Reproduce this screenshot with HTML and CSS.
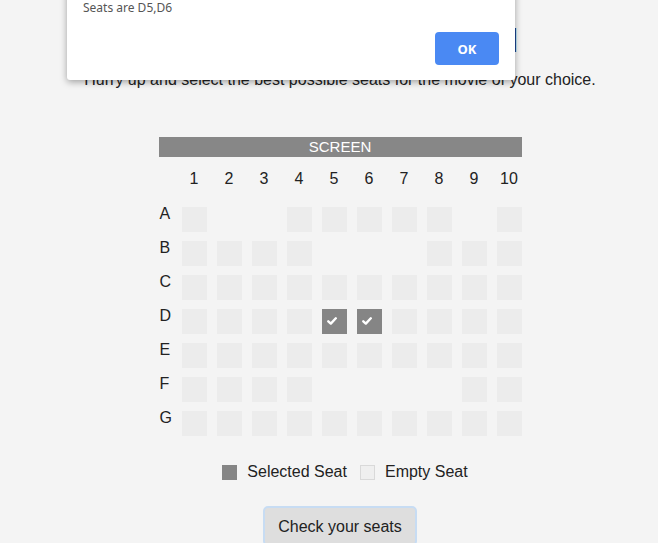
FILE: index.html
```html
<!DOCTYPE html>
<html lang="en">
<head>
<meta charset="utf-8">
<title>Movie Seat Selection</title>
<link rel="stylesheet" href="styles.css">
</head>
<body>
<div class="page">
  <h1 class="title">Online Movie Seat Portal</h1>
  <p class="intro">Hurry up and select the best possible seats for the movie of your choice.</p>

  <div class="hall">
    <div class="screen">SCREEN</div>
    <div class="row numbers">
      <span class="label"></span>
      <span class="num">1</span><span class="num">2</span><span class="num">3</span><span class="num">4</span><span class="num">5</span>
      <span class="num">6</span><span class="num">7</span><span class="num">8</span><span class="num">9</span><span class="num">10</span>
    </div>
    <div class="rows">
      <div class="row">
        <span class="label">A</span>
        <span class="seat"></span><span class="seat none"></span><span class="seat none"></span><span class="seat"></span><span class="seat"></span>
        <span class="seat"></span><span class="seat"></span><span class="seat"></span><span class="seat none"></span><span class="seat"></span>
      </div>
      <div class="row">
        <span class="label">B</span>
        <span class="seat"></span><span class="seat"></span><span class="seat"></span><span class="seat"></span><span class="seat none"></span>
        <span class="seat none"></span><span class="seat none"></span><span class="seat"></span><span class="seat"></span><span class="seat"></span>
      </div>
      <div class="row">
        <span class="label">C</span>
        <span class="seat"></span><span class="seat"></span><span class="seat"></span><span class="seat"></span><span class="seat"></span>
        <span class="seat"></span><span class="seat"></span><span class="seat"></span><span class="seat"></span><span class="seat"></span>
      </div>
      <div class="row">
        <span class="label">D</span>
        <span class="seat"></span><span class="seat"></span><span class="seat"></span><span class="seat"></span>
        <span class="seat selected"><svg class="check" viewBox="0 0 10 8" width="10" height="8"><path d="M1.3 4.3 L3.8 6.6 L8.8 1.3" fill="none" stroke="#fff" stroke-width="2.4" stroke-linecap="round" stroke-linejoin="round"/></svg></span>
        <span class="seat selected"><svg class="check" viewBox="0 0 10 8" width="10" height="8"><path d="M1.3 4.3 L3.8 6.6 L8.8 1.3" fill="none" stroke="#fff" stroke-width="2.4" stroke-linecap="round" stroke-linejoin="round"/></svg></span>
        <span class="seat"></span><span class="seat"></span><span class="seat"></span><span class="seat"></span>
      </div>
      <div class="row">
        <span class="label">E</span>
        <span class="seat"></span><span class="seat"></span><span class="seat"></span><span class="seat"></span><span class="seat"></span>
        <span class="seat"></span><span class="seat"></span><span class="seat"></span><span class="seat"></span><span class="seat"></span>
      </div>
      <div class="row">
        <span class="label">F</span>
        <span class="seat"></span><span class="seat"></span><span class="seat"></span><span class="seat"></span><span class="seat none"></span>
        <span class="seat none"></span><span class="seat none"></span><span class="seat none"></span><span class="seat"></span><span class="seat"></span>
      </div>
      <div class="row">
        <span class="label">G</span>
        <span class="seat"></span><span class="seat"></span><span class="seat"></span><span class="seat"></span><span class="seat"></span>
        <span class="seat"></span><span class="seat"></span><span class="seat"></span><span class="seat"></span><span class="seat"></span>
      </div>
    </div>
  </div>

  <div class="legend">
    <span class="legend-item"><span class="swatch swatch-selected"></span>Selected Seat</span>
    <span class="legend-item"><span class="swatch swatch-empty"></span>Empty Seat</span>
  </div>

  <div class="actions">
    <button class="check-btn" type="button">Check your seats</button>
  </div>
</div>

<div class="dialog" role="alertdialog">
  <div class="dialog-msg">Seats are D5,D6</div>
  <div class="dialog-actions">
    <button class="ok-btn" type="button">OK</button>
  </div>
</div>
</body>
</html>
```

FILE: styles.css
```css
html, body {
  margin: 0;
  padding: 0;
}

body {
  background: #f4f4f4;
  font-family: "Liberation Sans", Arial, sans-serif;
  color: #222;
  overflow: hidden;
  height: 543px;
  position: relative;
}

.page {
  padding-left: 22px;
  text-align: center;
}

.title {
  margin: 0;
  padding-top: 21px;
  padding-right: 9px;
  font-size: 33px;
  line-height: 40px;
  font-weight: normal;
  color: #1d2b4f;
}

.intro {
  margin: 10px 0 0;
  font-size: 16px;
  line-height: 18px;
  color: #222;
}

.hall {
  width: 363px;
  margin: 48px auto 0;
}

.screen {
  height: 20px;
  line-height: 20px;
  background: #878787;
  color: #fff;
  font-size: 15px;
}

.row {
  display: flex;
  gap: 10px;
}

.label {
  width: 12px;
  padding-left: 1px;
  text-align: left;
  font-size: 16px;
  line-height: 14px;
  color: #222;
}

.numbers {
  margin-top: 12px;
  height: 20px;
}

.num {
  width: 25px;
  text-align: center;
  font-size: 16px;
  line-height: 20px;
}

.rows {
  margin-top: 18px;
  display: flex;
  flex-direction: column;
  gap: 9px;
}

.seat {
  width: 25px;
  height: 25px;
  background: #ececec;
  display: flex;
  align-items: center;
  justify-content: center;
}

.seat.none {
  visibility: hidden;
}

.seat.selected {
  background: #858585;
}

.check {
  display: block;
  margin: 0 4px 1px 0;
}

.legend {
  margin-top: 26px;
  padding-left: 10px;
  display: flex;
  justify-content: center;
  align-items: center;
  gap: 13px;
  font-size: 16px;
  line-height: 20px;
  color: #222;
}

.legend-item {
  display: flex;
  align-items: center;
}

.swatch {
  width: 15px;
  height: 15px;
  margin-right: 10px;
  box-sizing: border-box;
}

.swatch-selected {
  background: #858585;
}

.swatch-empty {
  background: #efefef;
  border: 1px solid #d9d9d9;
}

.actions {
  margin-top: 24px;
  display: flex;
  justify-content: center;
}

.check-btn {
  font-family: "Liberation Sans", Arial, sans-serif;
  font-size: 16px;
  line-height: 20px;
  color: #222;
  background: #dedede;
  border: 2px solid #c7dcf3;
  border-radius: 5px;
  padding: 9px 13px 7px;
}

.dialog {
  position: absolute;
  left: 67px;
  top: -30px;
  width: 448px;
  box-sizing: border-box;
  padding: 30px 16px 15px;
  background: #fff;
  border-radius: 0 0 3px 3px;
  box-shadow: 0 2px 7px rgba(0, 0, 0, 0.35);
}

.dialog-msg {
  font-family: "Noto Sans", "Open Sans", sans-serif;
  font-size: 12px;
  line-height: 16px;
  color: #555;
}

.dialog-actions {
  margin-top: 16px;
  display: flex;
  justify-content: flex-end;
}

.ok-btn {
  width: 64px;
  height: 33px;
  border: none;
  border-radius: 4px;
  background: #4a89f3;
  color: #fff;
  font-family: "Noto Sans", "Open Sans", sans-serif;
  font-weight: bold;
  font-size: 13px;
  padding: 0;
}
```
